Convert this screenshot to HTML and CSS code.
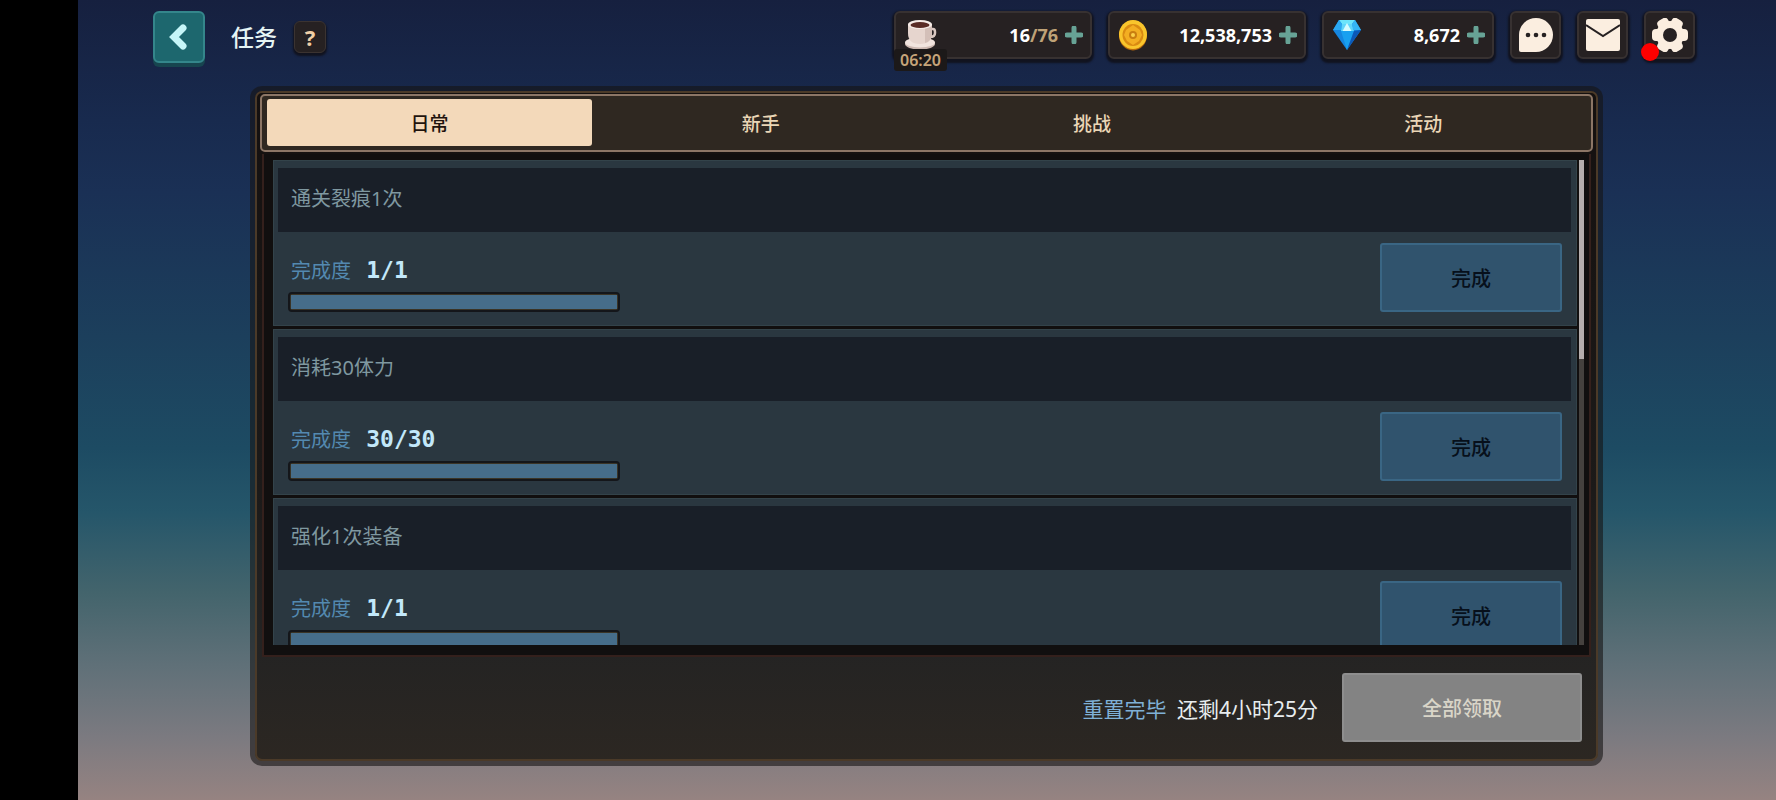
FILE: index.html
```html
<!DOCTYPE html>
<html lang="zh-CN">
<head>
  <meta charset="UTF-8">
  <title>任务</title>
  <link rel="stylesheet" href="styles.css">
</head>

<body>

  <header class="topbar">
    <button class="back" aria-label="返回">
      <svg width="24" height="32" viewBox="0 0 24 32"><path d="M16 7 L7 16 L16 25" fill="none" stroke="#c6f6f8" stroke-width="7" stroke-linecap="round" stroke-linejoin="miter"/></svg>
    </button>
    <h1>任务</h1>
    <button class="help" aria-label="帮助">?</button>

    <div class="resources">
      <button class="res">
        <svg width="34" height="32" viewBox="0 0 34 32">
          <ellipse cx="16" cy="25" rx="15" ry="5.500" fill="#cdb9b2"/>
          <ellipse cx="16" cy="23.500" rx="15" ry="5" fill="#f1e4de"/>
          <path d="M27 10h2q2 0 2 3v1q0 4-5 4" fill="none" stroke="#d9c8c2" stroke-width="2.500"/>
          <path d="M4 5v9q0 11 12 11t12-11V5z" fill="#e6d5ce"/>
          <path d="M21 9v15q7-2 7-10V5z" fill="#d3bfb8"/>
          <ellipse cx="16" cy="5.500" rx="12" ry="4.500" fill="#f6ece8"/>
          <ellipse cx="16" cy="6" rx="9.500" ry="3" fill="#5a2c26"/>
        </svg>
        <span class="num">16<i>/76</i></span>
        <svg class="plus" width="18" height="18" viewBox="0 0 18 18"><path d="M9 2v14M2 9h14" stroke="#67a396" stroke-width="5" stroke-linecap="round"/></svg>
        <span class="timer">06:20</span>
      </button>

      <button class="res">
        <svg width="30" height="32" viewBox="0 0 30 32">
          <ellipse cx="15" cy="16.500" rx="14" ry="15" fill="#b8690d"/>
          <ellipse cx="15" cy="15.500" rx="14" ry="14.500" fill="#f9c52c"/>
          <ellipse cx="15" cy="16" rx="10.500" ry="11" fill="#d98a12"/>
          <path d="M15 6l7 5 2 5-3 6-6 4-6-4-3-6 2-5z" fill="#f3ae22"/>
          <circle cx="15" cy="16" r="4" fill="#c97d10"/>
          <circle cx="15" cy="16" r="2" fill="#fbd04a"/>
        </svg>
        <span class="num">12,538,753</span>
        <svg class="plus" width="18" height="18" viewBox="0 0 18 18"><path d="M9 2v14M2 9h14" stroke="#67a396" stroke-width="5" stroke-linecap="round"/></svg>
      </button>

      <button class="res gem">
        <svg width="30" height="32" viewBox="0 0 30 32">
          <path d="M7 1h16l6 10-14 20L1 11z" fill="#1586e0"/>
          <path d="M7 1h16l-3 4H10z" fill="#6be4fb"/>
          <path d="M7 1L1 11h8l1-6z" fill="#2aa9f2"/>
          <path d="M10 5h10l2 7H9z" fill="#5fd6fb"/>
          <path d="M15 4l5 9H10z" fill="#d4fbff"/>
          <path d="M23 1l6 10h-8l-1-6z" fill="#35b5f5"/>
          <path d="M9 12h13l-7 19z" fill="#18a0f0"/>
          <path d="M29 11L15 31l7-19z" fill="#0c59b8"/>
        </svg>
        <span class="num">8,672</span>
        <svg class="plus" width="18" height="18" viewBox="0 0 18 18"><path d="M9 2v14M2 9h14" stroke="#67a396" stroke-width="5" stroke-linecap="round"/></svg>
      </button>

      <button class="icon-btn" aria-label="聊天">
        <svg width="34" height="34" viewBox="0 0 34 34">
          <path d="M17 0a17 17 0 0 1 0 34H2q-2 0-2-2V17A17 17 0 0 1 17 0z" fill="#fbeee0"/>
          <circle cx="9" cy="17" r="2.300" fill="#262122"/><circle cx="17" cy="17" r="2.300" fill="#262122"/><circle cx="25" cy="17" r="2.300" fill="#262122"/>
        </svg>
      </button>
      <button class="icon-btn" aria-label="邮件">
        <svg width="34" height="32" viewBox="0 0 34 32">
          <rect width="34" height="32" rx="2" fill="#fbeee0"/>
          <path d="M0 6l17 11L34 6" fill="none" stroke="#262122" stroke-width="2"/>
        </svg>
      </button>
      <button class="icon-btn" aria-label="设置">
        <svg width="36" height="34" viewBox="0 0 36 34">
          <g fill="#fbeee0">
            <circle cx="18" cy="17" r="14"/>
            <rect x="0" y="11" width="36" height="12" rx="4"/>
            <rect x="0" y="11" width="36" height="12" rx="4" transform="rotate(60 18 17)"/>
            <rect x="0" y="11" width="36" height="12" rx="4" transform="rotate(120 18 17)"/>
          </g>
          <circle cx="18" cy="17" r="7" fill="#262122"/>
        </svg>
        <span class="dot"></span>
      </button>
    </div>
  </header>

  <main class="panel">
    <nav class="tabs">
      <button class="active">日常</button>
      <button>新手</button>
      <button>挑战</button>
      <button>活动</button>
    </nav>

    <div class="list-frame">
      <ul class="list">
        <li class="task">
          <h2>通关裂痕1次</h2>
          <div class="task-body">
            <div class="progress">
              <label for="p1">完成度 <b>1/1</b></label>
              <progress id="p1" value="1" max="1"></progress>
            </div>
            <button class="done">完成</button>
          </div>
        </li>
        <li class="task">
          <h2>消耗30体力</h2>
          <div class="task-body">
            <div class="progress">
              <label for="p2">完成度 <b>30/30</b></label>
              <progress id="p2" value="30" max="30"></progress>
            </div>
            <button class="done">完成</button>
          </div>
        </li>
        <li class="task">
          <h2>强化1次装备</h2>
          <div class="task-body">
            <div class="progress">
              <label for="p3">完成度 <b>1/1</b></label>
              <progress id="p3" value="1" max="1"></progress>
            </div>
            <button class="done">完成</button>
          </div>
        </li>
      </ul>
      <div class="scrollbar"><div class="thumb"></div></div>
    </div>

    <footer class="bottom">
      <p><span>重置完毕</span> 还剩4小时25分</p>
      <button class="claim" disabled>全部领取</button>
    </footer>
  </main>

</body>
</html>
```
FILE: styles.css
```css
* {
  box-sizing: border-box;
}

body {
  margin: 0;
  height: 100vh;
  display: flex;
  flex-direction: column;
  border-left: 78px solid #000;
  background: linear-gradient(#16203f 0%, #182a4e 15%, #1a3055 24%, #1c3f5c 42%, #1d4b63 56%, #25566a 64%, #43646c 74%, #5f7078 83%, #7b7a80 92%, #968381 100%);
  font-family: "Noto Sans", "Noto Sans CJK SC", sans-serif;
  overflow: hidden;
}

button {
  padding: 0;
  border: none;
  font-family: inherit;
  cursor: pointer;
}

h1, h2, p, ul {
  margin: 0;
  padding: 0;
}

/* 顶部栏 */
.topbar {
  display: flex;
  align-items: flex-start;
  height: 86px;
  padding: 11px 81px 0 75px;
}

.back {
  display: flex;
  align-items: center;
  justify-content: center;
  width: 52px;
  height: 52px;
  border: 2px solid #34868b;
  border-radius: 6px;
  background: #1d676e;
  box-shadow: 0 4px 0 #17454f;
}

h1 {
  margin-left: 26px;
  color: #e6f5f4;
  font-size: 23px;
  font-weight: 500;
  line-height: 52px;
}

.help {
  width: 32px;
  height: 32px;
  margin: 10px 0 0 17px;
  border: 1px solid #3b3331;
  border-radius: 6px;
  background: #262122;
  box-shadow: 0 2px 2px 1px #11131f;
  color: #f0cfa6;
  font-size: 22px;
  font-weight: 700;
  line-height: 30px;
}

.resources {
  display: flex;
  gap: 16px;
  margin-left: auto;
}

.res,
.icon-btn {
  position: relative;
  display: flex;
  align-items: center;
  height: 48px;
  border: 2px solid #373131;
  border-radius: 6px;
  background: #262122;
  box-shadow: 0 2px 2px 2px #11131f;
}

.res {
  width: 198px;
  padding: 0 7px 0 8px;
}

.res.gem {
  width: 172px;
}

.num {
  margin-left: auto;
  color: #fff;
  font-size: 18px;
  font-weight: 700;
}

.num i {
  color: #bfa277;
  font-style: normal;
}

.plus {
  margin-left: 7px;
}

.timer {
  position: absolute;
  left: -2px;
  top: 36px;
  padding: 0 6px;
  border-radius: 3px;
  background: #1c1919;
  color: #c6a57a;
  font-size: 16px;
  font-weight: 600;
  line-height: 22px;
}

.icon-btn {
  justify-content: center;
  width: 51px;
}

.dot {
  position: absolute;
  left: -5px;
  bottom: -4px;
  width: 18px;
  height: 18px;
  border-radius: 50%;
  background: #fe0000;
}

/* 任务面板 */
.panel {
  flex: 1;
  min-height: 0;
  display: flex;
  flex-direction: column;
  margin: 0 173px 34px 172px;
  padding: 2px 5px 0;
  border: 5px solid rgba(22, 20, 20, 0.6);
  border-radius: 12px;
  outline: 2px solid #4b3a28;
  outline-offset: -7px;
  background: linear-gradient(#14100f, #1c1a19 60%, #232323 82%, #2c2722);
  background-clip: padding-box;
}

.tabs {
  display: flex;
  height: 58px;
  margin-top: 1px;
  padding: 3px 2px 4px;
  border: 2px solid #8c7666;
  border-radius: 5px;
  background: #2f2821;
}

.tabs button {
  flex: 1;
  margin: 0 3px;
  border-radius: 3px;
  background: none;
  color: #ead6b6;
  font-size: 19px;
  font-weight: 500;
}

.tabs .active {
  background: #f3d9ba;
  color: #1f140e;
}

.list-frame {
  flex: 1;
  min-height: 0;
  display: flex;
  gap: 2px;
  margin: 2px 2px 0;
  padding: 6px 5px 10px 9px;
  border: 2px solid #34201c;
  border-top: none;
  background: #110f0f;
}

.list {
  flex: 1;
  overflow: hidden;
  list-style: none;
}

.task {
  height: 166px;
  margin-bottom: 3px;
  padding: 7px 5px 0 4px;
  border: 1px solid #33434a;
  background: #2a3740;
}

h2 {
  height: 64px;
  padding-left: 13px;
  background: #191f28;
  color: #7f98a0;
  font-size: 20px;
  font-weight: 400;
  line-height: 62px;
}

.task-body {
  display: flex;
  justify-content: space-between;
  padding: 11px 9px 0 10px;
}

.progress {
  display: flex;
  flex-direction: column;
  width: 332px;
}

label {
  padding: 11px 0 0 3px;
  color: #5389b0;
  font-size: 20px;
  line-height: 32px;
}

label b {
  margin-left: 10px;
  color: #c2e8fa;
  font: bold 23px/32px "DejaVu Sans Mono", monospace;
}

progress {
  appearance: none;
  width: 100%;
  height: 20px;
  margin-top: 5px;
  padding: 1px;
  border: 2px solid #14161a;
  border-radius: 4px;
  background: #3a3426;
}

progress::-webkit-progress-bar {
  background: #1c1f22;
}

progress::-webkit-progress-value {
  background: #466d8a;
}

.done {
  width: 182px;
  height: 69px;
  border: 2px solid #3a6684;
  border-radius: 3px;
  background: #30536d;
  color: #07101b;
  font-size: 20px;
  font-weight: 500;
}

.scrollbar {
  width: 5px;
  background: #45413e;
}

.thumb {
  height: 41%;
  background: #b5aeae;
}

/* 底部 */
.bottom {
  display: flex;
  align-items: center;
  justify-content: flex-end;
  gap: 24px;
  height: 104px;
  padding: 0 11px 3px 0;
}

.bottom p {
  color: #e8edef;
  font-size: 21px;
}

.bottom span {
  margin-right: 5px;
  color: #7fb0d6;
}

.claim {
  width: 240px;
  height: 69px;
  border: 2px solid #8e8e8e;
  border-radius: 3px;
  background: #838383;
  color: #d9d5c8;
  font-size: 20px;
  font-weight: 500;
}
```
